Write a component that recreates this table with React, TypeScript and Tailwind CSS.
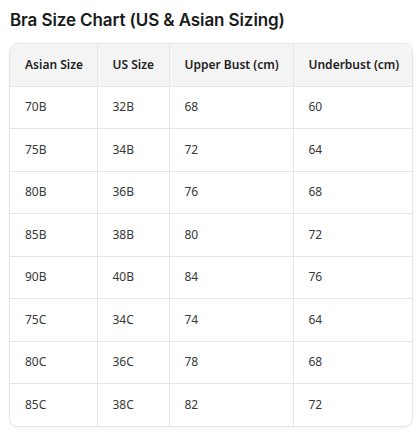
import React from "react";

const rows = [
  ["70B", "32B", "68", "60"],
  ["75B", "34B", "72", "64"],
  ["80B", "36B", "76", "68"],
  ["85B", "38B", "80", "72"],
  ["90B", "40B", "84", "76"],
  ["75C", "34C", "74", "64"],
  ["80C", "36C", "78", "68"],
  ["85C", "38C", "82", "72"],
];

const headers = ["Asian Size", "US Size", "Upper Bust (cm)", "Underbust (cm)"];

export default function App() {
  return (
    <div className="w-[415px] h-[438px] bg-white pl-[9px] pr-[3px] pt-[9px]">
      <h1
        className="text-[17px] font-semibold text-[#1a1a1a] leading-[22px] pl-[1px] tracking-[-0.1px]"
        style={{ fontFamily: "Inter, 'Noto Sans', sans-serif" }}
      >
        Bra Size Chart (US &amp; Asian Sizing)
      </h1>
      <div className="mt-[12px] w-[404px] rounded-[9px] border border-[#e6e6e6] overflow-hidden shadow-[0_1px_3px_rgba(0,0,0,0.06)]">
        <table
          className="w-full border-collapse table-fixed text-[12px]"
          style={{ fontFamily: "'Noto Sans', 'Open Sans', sans-serif" }}
        >
          <colgroup>
            <col className="w-[87px]" />
            <col className="w-[72px]" />
            <col className="w-[124px]" />
            <col />
          </colgroup>
          <thead>
            <tr className="bg-[#f4f4f4] h-[42px]">
              {headers.map((h, i) => (
                <th
                  key={h}
                  className={`text-left font-semibold text-[#222] pl-[15px] pr-0 border-b border-[#e6e6e6] ${
                    i < 3 ? "border-r" : ""
                  }`}
                >
                  {h}
                </th>
              ))}
            </tr>
          </thead>
          <tbody>
            {rows.map((r, ri) => (
              <tr key={ri} className="h-[42.5px]">
                {r.map((c, ci) => (
                  <td
                    key={ci}
                    className={`pl-[15px] text-[#383838] border-[#e6e6e6] ${ci < 3 ? "border-r" : ""} ${
                      ri < rows.length - 1 ? "border-b" : ""
                    }`}
                  >
                    {c}
                  </td>
                ))}
              </tr>
            ))}
          </tbody>
        </table>
      </div>
    </div>
  );
}
